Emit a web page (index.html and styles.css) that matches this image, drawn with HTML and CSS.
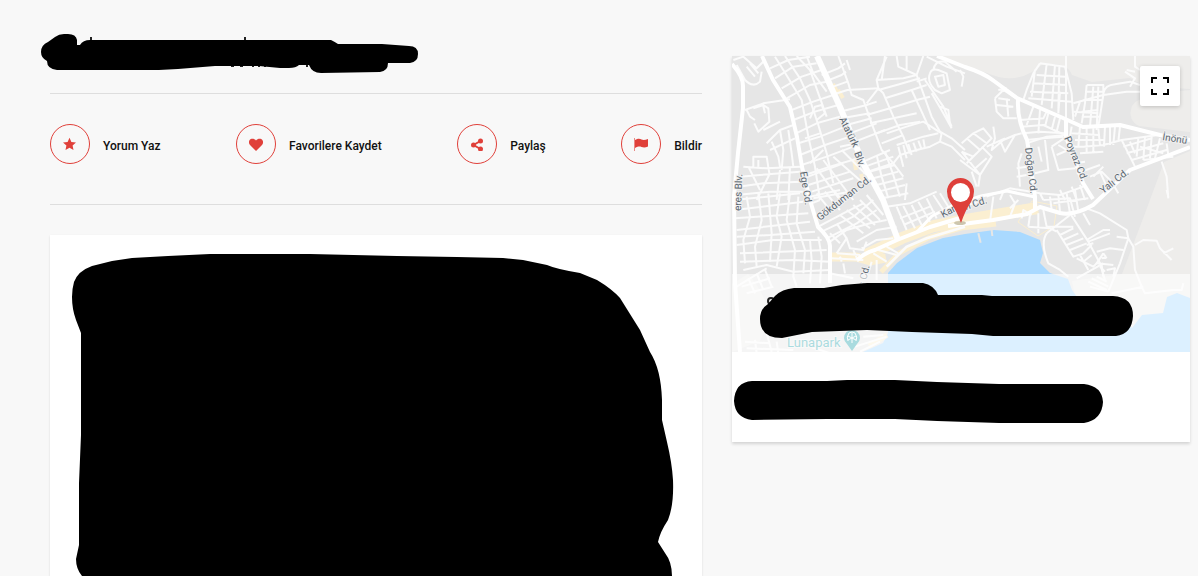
FILE: index.html
```html
<!DOCTYPE html>
<html lang="tr">
<head>
  <meta charset="UTF-8" />
  <meta name="viewport" content="width=device-width, initial-scale=1" />
  <title>Mekan</title>
  <link rel="stylesheet" href="styles.css">
</head>
<body>
  <div class="page">
    <main class="main">
      <header class="title">
        <svg class="title-shape" viewBox="0 0 370 44" aria-hidden="true">
          <path fill="#222" d="M40 7h2v4h-2zM194 7h2v4h-2zM181 34h3v3h-3zM190 34h3v3h-3zM202 34h2v3h-2zM208 34h2v3h-2zM214 34h2v3h-2zM222 34h2v3h-2zM228 35h9v2h-9zM256 35h2v2h-2z"/>
          <path d="M-9 22Q-9 15-2 12L5 7Q9 4 14 4H18Q26 4 27 10V15H30Q33 10 40 10H281Q285 12 288 14L332 14 359 16Q368 16 368 24Q368 32 360 33H338Q338 41 330 42L271 43Q262 43 259 35L249 35Q246 38 239 38H230L209 36L165 36 128 39 109 40H-2Q-3 40-3 40L-3 31V40Q-3 40 7 40Q-3 39-3 31Q-9 28-9 22Z"/>
        </svg>
      </header>

      <nav class="actions">
        <button type="button" class="action">
          <span class="circle">
            <svg viewBox="0 0 14 14" width="14" height="14"><path d="M6.500 .8 8.400 4.900 13 5.400 9.600 8.500 10.500 13 6.500 10.800 2.500 13 3.400 8.500 0 5.400 4.600 4.900Z"/></svg>
          </span>
          <span class="action-text">Yorum Yaz</span>
        </button>
        <button type="button" class="action">
          <span class="circle">
            <svg viewBox="0 0 14 14" width="14" height="14"><path d="M7 14 1 8C-.8 6-.2 3.200 1.800 2 3.700 1.200 5.700 1.800 7 3.400 8.300 1.800 10.300 1.200 12.200 2 14.200 3.200 14.800 6 13 8Z"/></svg>
          </span>
          <span class="action-text">Favorilere Kaydet</span>
        </button>
        <button type="button" class="action">
          <span class="circle">
            <svg viewBox="0 0 14 14" width="14" height="14"><path d="M10.500 4 3.500 8 10.500 12" fill="none" stroke="#e0403a" stroke-width="2"/><circle cx="10.500" cy="4" r="2.500"/><circle cx="3.500" cy="8" r="2.500"/><circle cx="10.500" cy="12" r="2.500"/></svg>
          </span>
          <span class="action-text">Paylaş</span>
        </button>
        <button type="button" class="action">
          <span class="circle">
            <svg viewBox="0 0 14 14" width="14" height="14"><path d="M0 1h1v13H0z" opacity=".6"/><path d="M1 3C4 1.300 6 1.700 7.500 2.500S11.500 3 14 2V9.500C11.500 10.700 9.500 10.700 7.500 10S4 9.500 1 11Z"/></svg>
          </span>
          <span class="action-text">Bildir</span>
        </button>
      </nav>

      <section class="content">
        <svg class="content-shape" viewBox="0 0 652 341" aria-hidden="true">
          <path d="M22 62Q22 54 24 47Q28 36 42 31L62 26L82 23L118 21L160 19H260L347 21L407 22L453 23L473 25L497 30Q506 34 530 38L547 45Q562 54 570 63L590 95L600 117Q611 134 612 165V185L617 207Q622 228 623 245Q624 270 618 285Q610 297 608 307L615 318Q622 327 622 341H32Q26 334 26 324L29 310V248L31 200V98L26 85Q22 74 22 62Z"/>
        </svg>
      </section>
    </main>

    <aside class="side">
      <div class="map">
        <svg class="map-canvas" viewBox="0 0 458 296" preserveAspectRatio="xMidYMid slice" role="img" aria-label="Harita">
          <rect width="458" height="296" fill="#e6e6e6"/>
          <!-- open land -->
          <g fill="#eeedeb">
            <path d="M210 0 228 8 255 17Q280 28 300 16L310 9Q335 5 340 19L360 26 398 22 412 30 458 33V0Z"/>
            <path d="M400 50Q395 64 407 70L458 76V34Q406 38 400 50Z"/>
            <path d="M458 95 432 106 412 160 390 218 340 225 350 275 458 296Z"/>
            <path d="M0 228 16 218Q34 238 38 262L28 285 0 296Z"/>
          </g>
          <!-- sea -->
          <path class="sea" d="M156 217 165 207 185 192 211 182 233 178 262 174 288 176 308 184 311 197 308 207 318 217 336 223 340 234 345 241 372 240 400 272 410 259 431 257 435 241 445 237 458 242V296H131L151 287 156 277Z"/>
          <!-- beach and business streets -->
          <g class="sand">
            <path d="M100 201 124 201 138 205 154 202" stroke-width="9"/>
            <path d="M134 199 170 182 202 170 228 165 270 158 306 152" stroke-width="12"/>
            <path d="M300 145 325 150 322 170 306 180 286 166Z" fill="#fbefd1"/>
            <path d="M149 216 167 197 198 181 229 172 264 168" stroke-width="5"/>
            <path d="M101 28 106 38M106 34 111 42M122 103 124 114M129 118 132 128" stroke-width="4"/>
            <path d="M137 290 155 279" stroke-width="5"/>
          </g>

          <!-- north west -->
          <g class="streets" transform="translate(-2 -6) scale(.3333)">
            <path d="M20 45 45 90Q70 115 90 95L95 65M10 30 40 20 80 55 105 30M50 50 75 80M60 40 85 70M45 180 100 160 180 148M50 180 60 200 75 210M70 175 100 165 115 175 118 215 85 245 73 220M100 240 150 215M98 160 105 190"/>
            <path d="M135 20 160 60 215 150 235 260 255 350 270 450M165 18 210 85 240 150 265 225 290 310 310 400M200 18 240 60 265 130 290 200M230 18 250 70 290 125"/>
            <path d="M120 55 175 30 240 20M135 85 190 50 260 40M155 115 215 80 275 60M170 145 240 105 290 95M185 180 250 155 310 135M190 210 255 185 325 165M198 250 260 220 330 200M205 280 270 260 345 230M210 315 285 285 360 260M215 345 290 320 370 290M225 375 300 350 385 325"/>
            <path d="M275 75 325 55 345 40M285 95 335 75 348 65M295 115 352 95M305 135 352 120 445 115M330 185 410 165 440 155M335 205 420 190M350 225 425 205M360 250 440 220M375 275 465 240"/>
            <path d="M325 18 355 100 365 135 400 150 425 220 455 300 490 340 520 380M360 60 350 30M410 160 445 115 460 130 490 200 520 260 540 310M445 115 440 90 470 20M465 18 455 90M440 90 520 85 560 75M445 120 500 105 570 85M465 145 545 120 590 105M480 175 560 150 600 140M410 195 480 175M420 220 490 205 560 190M440 250 510 225 570 215M455 280 520 255"/>
            <path d="M500 18 505 50 560 75 580 18M530 18 530 60M560 75 580 130 605 200 630 245 665 265 705 300M585 90 640 170 665 230M560 95 590 85M545 120 575 185 600 240M590 20 650 50 705 70M600 70Q590 95 615 120L635 130 660 120 650 70 625 60Q605 55 600 70M610 60Q615 30 645 35L680 65M615 80 640 75 645 105 625 110ZM605 130 640 190 665 235M630 170 655 180 660 220"/>
            <path d="M470 250 530 230 580 215 635 250 630 275 600 290 560 300 510 315 490 340 400 370M500 285 580 260 625 250M505 290 520 350M520 285 530 325M535 282 545 315M550 278 560 305M565 272 575 298M580 268 585 295M630 275 665 290 705 330"/>
            <path d="M400 335 480 300M405 350 490 320M420 365 495 345M430 385 505 365M440 405 520 385M445 425 525 405M455 445 535 430M440 315 455 380 475 445M465 305 490 375 510 440M530 400 525 450"/>
            <path d="M110 280 150 240 190 225M120 300 195 265M150 240 160 300 155 360M125 275 145 320 150 350M175 240 185 310 190 350M40 350 110 355 210 350M30 380 90 375 210 365M25 410 100 400 215 395M20 435 120 425 220 425M70 355 70 320 110 320 118 370M85 330 85 350M55 350 90 420M120 370 80 450M150 360 140 450M180 350 175 450"/>
            <path d="M220 385 340 340M235 405 360 365M245 425 370 385M250 445 360 425M280 330 370 450M310 320 400 400M335 300 410 375M260 355 330 450M240 340 280 300M225 265 270 250M240 205 255 170 275 165 285 190 260 210M330 290 380 280"/>
          </g>

          <!-- north east -->
          <g class="streets" transform="translate(228 -6) scale(.3333)">
            <path d="M0 60 10 80 5 110M240 40 220 70 200 120 190 150M240 40 315 50 335 130 340 210M260 42 245 165M285 45 275 175M298 50 295 185M230 75 315 80M220 100 320 105M210 125 325 130M205 145 335 155M225 60 215 140M318 18 318 210M300 125 295 190"/>
            <path d="M105 145 130 120 175 150M105 145 110 185 130 205 170 205M110 165 160 170M115 145 150 150M140 145 145 200M115 120 140 115M180 210 250 205 260 185M185 230 250 225 325 260M190 250 240 245 315 250M200 270 250 265 310 260M220 170 200 225M240 180 235 250M265 190 255 230M285 200 275 240M300 205 290 245"/>
            <path d="M340 160 430 135 500 125 550 125M380 105 430 105 430 135M380 105 375 160 365 220M400 110 390 230M415 110 410 240M430 135 415 230M375 125 430 125M370 150 425 150M365 185 415 180M365 200 420 200M430 130Q435 105 465 103L510 95 540 105M525 18 525 50 540 60M495 65 525 85 510 110M525 65 500 60M360 155 345 200M340 185 415 190"/>
            <path d="M335 230 325 290 370 290 430 285 485 270 595 255M335 250 415 255M345 270 430 270M360 230 355 290M380 235 380 310M400 235 400 310M415 235 420 285M435 230 432 290M450 230 450 285M465 230 460 285M480 230 475 275M340 285 350 340M360 310 430 305"/>
            <path d="M485 270 525 350M490 290 575 265M500 310 610 280M515 330 620 300M510 275 525 310M535 265 530 320M555 260 550 330M575 260 570 325M600 265 585 325M620 280 625 315M540 290 610 310M550 330 640 320M605 335 620 380 625 445"/>
            <path d="M5 280 40 250 70 235 95 265 70 290 40 320 5 305M20 265 60 300M40 250 80 280M5 305 60 375 95 320 65 290M20 340 50 310M40 360 80 325M60 375 55 410M35 365 50 410M60 375 0 330M100 230 105 265 95 300 130 270 165 255M120 270 135 305 165 255 185 250M80 290 135 265"/>
            <path d="M200 280 260 260 320 255M235 290 245 335M255 270 265 360 225 370M185 310 175 340 180 410M200 350 170 355M200 375 170 380M275 290 295 360 345 355M275 290 320 260M290 315 325 300M345 340 375 335M295 285 320 300M350 370 420 345M390 380 425 365 455 395 475 430M430 350 400 380M420 365 440 410"/>
            <path d="M80 440 150 415 240 430 300 435 370 410M240 430 250 450M300 420 315 450M335 410 350 450M360 405 375 450M130 425 120 450"/>
          </g>

          <!-- south west -->
          <g class="streets" transform="translate(-2 134) scale(.3333)">
            <path d="M10 30 210 10M15 60 220 35M15 85 235 70M20 120 240 95M20 140 120 135 255 125M20 165 130 150 275 150M30 190 290 180M30 215 190 210 300 215M40 240 110 225 190 245 300 240M20 290 110 235M35 290 120 265M50 310 130 290"/>
            <path d="M50 20 60 80 40 150 45 220M85 10 95 90 75 170 80 230M115 10 125 130 120 215M150 10 140 80 155 140 140 230M180 10 170 90 195 180 190 260 200 290M205 20 200 100 225 180 220 250M240 150 245 210 240 280M265 140 275 200 270 280M55 265 75 310M80 250 100 300M105 240 125 290"/>
            <path d="M240 20 330 0M245 40 270 30M260 10 300 60M285 5 330 60M310 0 340 35M265 110 340 70 400 40M275 125 370 80 430 30M290 145 380 100 440 60M300 155 350 120 420 100 470 90M330 75 400 130M350 60 420 115M370 45 435 105M390 30 450 90M410 15 460 75M300 130 330 160M320 100 350 145"/>
            <path d="M320 190 350 145 360 175 400 180 410 155M305 205 400 210M320 190 390 195M380 155 440 120 500 110M395 175 440 150 490 145M430 190 470 215M445 180 500 195M470 170 505 190M330 200 335 215M300 215 300 250 370 265M340 220 345 250M370 180 385 215M425 215 415 250M440 210 440 270"/>
            <path d="M470 50 540 40 620 5M475 75 490 120M500 50 530 120M520 48 555 115M545 45 575 105M565 35 600 95M590 25 620 85M510 85 600 50M520 105 615 65M610 15 640 60M630 10 655 50M640 60 700 30"/>
            <path d="M470 230 530 170 590 145 705 110" stroke-width="8"/>
            <path d="M110 430 125 485M75 450 80 490M45 455 120 460M50 475 190 480M140 455 145 490M400 440 460 435M375 470 470 440M390 485 450 455M240 470 300 490"/>
          </g>

          <!-- south east -->
          <g class="streets" transform="translate(228 134) scale(.3333)">
            <path d="M100 20 90 95M150 15 165 40 150 80M175 30 150 55M185 85 190 60 215 75M210 75 205 110M235 70 235 130M250 60 260 110 290 125M205 110 270 115M250 30 330 25 345 80M270 20 275 60M295 15 300 65M320 10 330 70 385 155 420 220 435 270M345 0 355 65M370 70 390 105M380 55 420 70 500 120 505 145M280 40 385 25"/>
            <path d="M290 120 340 200 370 190 395 165M260 130 330 75M300 135 340 115M310 150 355 130M320 165 370 145M330 180 380 160M350 205 400 230 415 215M360 195 385 240M395 195 370 215M385 155 450 130M380 150 430 120 450 120M260 110 340 110M260 130Q240 160 265 220L300 240 325 260"/>
            <path d="M470 140 505 145 520 170 525 240 545 290 555 310 640 300 665 300 670 280M525 165 550 150 590 152 600 175 635 210M610 190 640 175M505 145 480 220 445 305M410 185 450 175 490 180M430 190 410 220 460 225M430 190 440 205M440 240 465 235 460 260M420 230 435 245M385 275 440 300M395 265 445 290M410 260 440 275M350 265 430 220M445 305 390 290M380 165 400 160M425 205 440 200M430 260 425 225M455 310 550 290"/>
            <path d="M620 0 625 20M0 50 60 35"/>
            <path class="pier" d="M55 130 62 158M95 120 97 138"/>
          </g>

          <!-- main roads -->
          <g class="roads">
            <path d="M85 0 108 51 131 107 151 144 166 184" stroke-width="6"/>
            <path d="M0 8Q11 20 11 30V52L6 97 2 140 3 227 8 296" stroke-width="4"/>
            <path d="M30 0 41 24 58 51 65 81 70 111 78 144 86 171Q98 182 98 190V227" stroke-width="4"/>
            <path d="M125 204Q134 196 143 194L165 184 198 171 228 162" stroke-width="4"/>
            <path d="M216 170 261 164 295 158 308 151 328 157Q342 160 361 149L398 114 458 91" stroke-width="4"/>
            <path d="M205 0 233 11Q252 17 262 25L285 42 331 62 351 71 388 69 428 79 458 84" stroke-width="4"/>
            <path d="M286 44Q285 64 295 84L297 96 303 141V154" stroke-width="4"/>
            <path d="M334 62V81L351 127 361 143" stroke-width="4"/>
            <path d="M185 176 200 160 220 150 249 140 275 135 303 141" stroke-width="3"/>
          </g>

          <g class="labels">
            <text transform="translate(107 63) rotate(64)">Atatürk</text>
            <text transform="translate(122 97) rotate(70)">Blv.</text>
            <text transform="translate(68 116) rotate(81)">Ege Cd.</text>
            <text transform="translate(9 155) rotate(-88)">eres Blv.</text>
            <text transform="translate(88 165) rotate(-38)">Gökduman Cd.</text>
            <text transform="translate(131 237) rotate(-76)">us Cd.</text>
            <text transform="translate(211 162) rotate(-28)">Kan</text>
            <text transform="translate(234 154) rotate(-18)">n Cd.</text>
            <text transform="translate(293 92) rotate(83)">Doğan Cd.</text>
            <text transform="translate(332 82) rotate(68)">Poyraz Cd.</text>
            <text transform="translate(371 138) rotate(-38)">Yalı Cd.</text>
            <text transform="translate(430 84) rotate(9)">İnönü</text>
            <text class="poi" x="55" y="291">Lunapark</text>
          </g>
          <path fill="#2aa5ae" d="M120 295 115 288Q112 285 112 282A8 8 0 0 1 128 282Q128 285 125 288Z"/>
          <path fill="none" stroke="#fff" d="M120 277V287M116 280 124 284M124 280 116 284M117 277Q120 275 123 277M116 285Q114 281 117 277M124 285Q126 281 123 277"/>

          <ellipse cx="228" cy="167" rx="6" ry="2" fill="#cdc6ae"/>
          <path fill="#de3f3a" d="M229 167Q225 155 218 146Q215 141 215 135.500A13.500 13.500 0 0 1 242 135.500Q242 141 239 146Q233 155 229 167Z"/>
          <circle cx="228.500" cy="136.500" r="9.500" fill="#fff"/>
        </svg>

        <button type="button" class="fullscreen" aria-label="Tam ekran">
          <svg viewBox="0 0 18 18" width="18" height="18"><path d="M0 0H6V2H2V6H0ZM12 0H18V6H16V2H12ZM0 12H2V16H6V18H0ZM16 12H18V18H12V16H16Z"/></svg>
        </button>

        <div class="map-caption">
          <svg class="caption-shape" viewBox="0 0 458 78" aria-hidden="true">
            <circle cx="39" cy="27" r="3" fill="none" stroke="#222" stroke-width="2"/>
            <path d="M28 45Q28 35 36 30L43 22Q50 15 62 14H92L110 11 135 9H191Q202 11 206 21L250 21 260 22H381Q401 23 401 42Q400 60 384 62H261L240 60 180 58 135 56 80 58 60 62 50 64Q28 64 28 45Z"/>
          </svg>
        </div>
      </div>
      <div class="address">
        <svg class="address-shape" viewBox="0 0 458 90" aria-hidden="true">
          <path d="M2 49Q3 30 20 29H95L115 28H163L205 30 267 32H352Q370 34 371 50Q370 68 352 71H267L205 69 163 67H95L20 68Q3 66 2 49Z"/>
        </svg>
      </div>
    </aside>
  </div>
</body>
</html>
```

FILE: styles.css
```css
* {
  box-sizing: border-box;
}
body {
  margin: 0;
  background: #f8f8f8;
  color: #111;
  font-family: Roboto, "Liberation Sans", sans-serif;
  font-size: 12px;
}
svg {
  display: block;
}
.page {
  display: grid;
  grid-template-columns: 652fr 458fr;
  gap: 30px;
  min-height: 100vh;
  padding: 30px 8px 0 50px;
}

/* listing */
.main {
  display: flex;
  flex-direction: column;
}
.title {
  padding-bottom: 19px;
  border-bottom: 1px solid #dedede;
}
.title-shape {
  width: 370px;
  overflow: visible;
}
.actions {
  display: flex;
  justify-content: space-between;
  padding: 30px 0 40px;
  border-bottom: 1px solid #dedede;
}
.action {
  display: flex;
  align-items: center;
  gap: 13px;
  padding: 0;
  border: none;
  background: none;
  color: #111;
  font-family: inherit;
  font-size: 12px;
  font-weight: 500;
  line-height: 20px;
  cursor: pointer;
}
.action-text {
  padding-top: 4px;
}
.circle {
  display: flex;
  align-items: center;
  justify-content: center;
  width: 40px;
  height: 40px;
  border: 1px solid #e0403a;
  border-radius: 50%;
}
.circle svg {
  fill: #e0403a;
}
.content {
  flex: 1;
  margin-top: 30px;
  background: #fff;
  box-shadow: 0 1px 2px rgba(0, 0, 0, 0.12);
}
.content-shape {
  width: 100%;
}

/* map card */
.side {
  align-self: start;
  margin-top: 26px;
  background: #fff;
  box-shadow: 0 2px 3px rgba(0, 0, 0, 0.15);
}
.map {
  position: relative;
}
.map-canvas {
  width: 100%;
}
.sea {
  fill: #a9d9ff;
}
.sand path {
  stroke: #fbefd1;
  fill: none;
}
.streets {
  stroke-width: 6px;
}
.streets path {
  fill: none;
  stroke: #fbfbfb;
  stroke-linejoin: round;
}
.streets .pier {
  stroke: #e6e6e6;
}
.roads path {
  fill: none;
  stroke: #fff;
  stroke-linejoin: round;
}
.labels text {
  fill: #5b6770;
  stroke: #f0f0f0;
  stroke-width: 2px;
  paint-order: stroke;
  font-size: 10px;
}
.labels .poi {
  fill: #2aa5ae;
  font-size: 13px;
}
.fullscreen {
  position: absolute;
  top: 10px;
  right: 10px;
  display: flex;
  align-items: center;
  justify-content: center;
  width: 40px;
  height: 40px;
  padding: 0;
  border: none;
  border-radius: 2px;
  background: #fff;
  box-shadow: 0 1px 4px rgba(0, 0, 0, 0.2);
  cursor: pointer;
}
.map-caption {
  position: absolute;
  right: 0;
  bottom: 0;
  left: 0;
  background: rgba(255, 255, 255, 0.6);
}
.caption-shape,
.address-shape {
  width: 100%;
}
```
